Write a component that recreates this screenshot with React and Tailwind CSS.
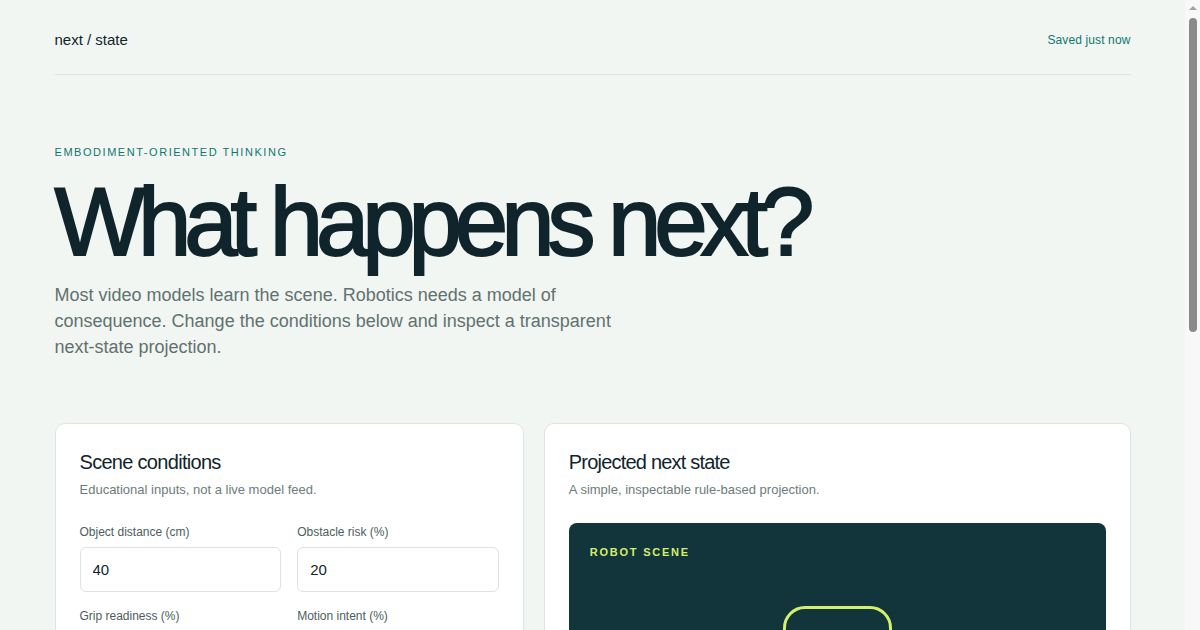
import { useState } from 'react';

const fields = [
  { key: 'distance', label: 'Object distance (cm)', value: 40 },
  { key: 'risk', label: 'Obstacle risk (%)', value: 20 },
  { key: 'grip', label: 'Grip readiness (%)', value: 75 },
  { key: 'motion', label: 'Motion intent (%)', value: 60 },
];

export default function App() {
  const [values, setValues] = useState(
    Object.fromEntries(fields.map((f) => [f.key, f.value]))
  );

  return (
    <div className="h-screen overflow-y-auto pr-[15px] bg-[#f2f6f3] text-[#10242b] font-['Liberation_Sans',Arial,sans-serif]">
      {/* scrollbar as in the capture */}
      <div className="fixed right-0 top-0 h-screen w-[15px] bg-[#f8f8f8] flex flex-col items-center">
        <span className="mt-[6px] w-0 h-0 border-l-4 border-r-4 border-b-4 border-l-transparent border-r-transparent border-b-[#a3a3a3]" />
        <span className="mt-[8px] w-2 h-[314px] rounded-full bg-[#8a8a8a]" />
      </div>

      <div className="max-w-[1076px] mx-auto">
        <header className="flex items-center justify-between pt-[30px] pb-6 border-b border-[#dbe4e1]">
          <span className="text-[15px] leading-5">next / state</span>
          <span className="text-xs leading-5 text-[#0f766e] tracking-[0.01em]">Saved just now</span>
        </header>

        <section className="pt-[69px]">
          <p className="text-[11px] leading-4 tracking-[0.14em] uppercase text-[#0f766e]">Embodiment-oriented thinking</p>
          <h1 className="mt-3 text-[96px] leading-[100px] tracking-[-0.074em] [-webkit-text-stroke:2px_#10242b]">What happens next?</h1>
          <p className="mt-[10px] max-w-xl text-lg leading-[26px] text-[#60716f]">
            Most video models learn the scene. Robotics needs a model of consequence. Change the conditions below and inspect a transparent next-state projection.
          </p>
        </section>

        <section className="mt-[63px] grid grid-cols-[4fr_5fr] gap-5 items-start pb-24">
          <div className="bg-white border border-[#dde5e2] rounded-[10px] p-6">
            <h2 className="text-xl leading-7 tracking-[-0.035em]">Scene conditions</h2>
            <p className="mt-1 text-[13px] leading-5 text-[#6b7c7a]">Educational inputs, not a live model feed.</p>
            <div className="mt-6 grid grid-cols-2 gap-x-4 gap-y-4">
              {fields.map((f) => (
                <label key={f.key} className="flex flex-col gap-[7px]">
                  <span className="text-xs leading-4 text-[#4b5e5c]">{f.label}</span>
                  <input
                    type="number"
                    value={values[f.key]}
                    onChange={(e) => setValues({ ...values, [f.key]: e.target.value })}
                    className="h-[45px] px-3 rounded-md border border-[#dbe4e1] bg-white text-[15px] text-[#10242b] outline-none"
                  />
                </label>
              ))}
            </div>
            <div className="mt-5 flex flex-col gap-2">
              <span className="text-xs leading-4 text-[#4b5e5c]">Surface</span>
              <div className="grid grid-cols-3 gap-2">
                {['Dry', 'Wet', 'Uneven'].map((s, i) => (
                  <button key={s} className={`h-10 rounded-md border text-sm ${i === 0 ? 'bg-[#12343b] border-[#12343b] text-white' : 'border-[#dbe4e1] text-[#10242b]'}`}>{s}</button>
                ))}
              </div>
            </div>
            <button className="mt-6 w-full h-11 rounded-md bg-[#0f766e] text-white text-sm font-semibold">Project next state</button>
          </div>

          <div className="bg-white border border-[#dde5e2] rounded-[10px] p-6">
            <h2 className="text-xl leading-7 tracking-[-0.04em]">Projected next state</h2>
            <p className="mt-1 text-[13px] leading-5 text-[#6b7c7a]">A simple, inspectable rule-based projection.</p>
            <div className="mt-[23px] bg-[#12343b] rounded-lg px-[21px] pt-[21px] pb-6">
              <p className="text-[11px] leading-4 font-bold tracking-[0.16em] text-[#d4f06a]">ROBOT SCENE</p>
              <div className="mt-[46px] flex flex-col items-center">
                <div className="w-[109px] h-[86px] rounded-[22px] border-[3px] border-[#d4f06a] flex items-center justify-center gap-5">
                  <span className="w-3 h-3 rounded-full bg-[#d4f06a]" />
                  <span className="w-3 h-3 rounded-full bg-[#d4f06a]" />
                </div>
                <div className="w-[6px] h-8 bg-[#d4f06a]" />
                <div className="w-[180px] h-[6px] rounded-full bg-[#d4f06a]" />
              </div>
              <div className="mt-8 h-px bg-white/15" />
              <div className="mt-3 flex justify-between text-xs text-[#b9cbc8]">
                <span>Robot</span>
                <span>Object · 40 cm</span>
              </div>
            </div>
            <div className="mt-5 grid grid-cols-3 gap-3">
              {[['Reach', '82%'], ['Collision', '14%'], ['Grasp', '71%']].map(([k, v]) => (
                <div key={k} className="rounded-md border border-[#dde5e2] p-3">
                  <p className="text-xs text-[#6b7c7a]">{k}</p>
                  <p className="mt-1 text-xl tracking-[-0.03em]">{v}</p>
                </div>
              ))}
            </div>
          </div>
        </section>
      </div>
    </div>
  );
}
